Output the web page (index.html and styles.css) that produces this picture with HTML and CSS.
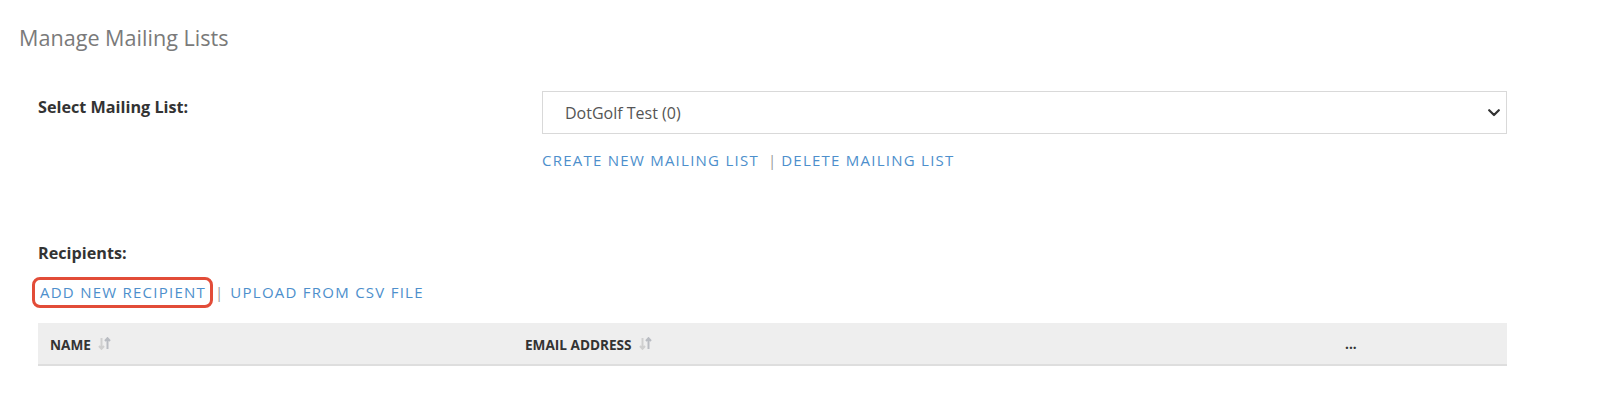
FILE: index.html
```html
<!DOCTYPE html>
<html lang="en">
<head>
<meta charset="utf-8">
<title>Manage Mailing Lists</title>
<link rel="stylesheet" href="styles.css">
</head>
<body>
<div class="page">
  <h1 class="title">Manage Mailing Lists</h1>

  <div class="content">
    <div class="form-row">
      <label class="label" for="list">Select Mailing List:</label>
      <div class="field">
        <div class="select-wrap">
          <select id="list" class="select">
            <option>DotGolf Test (0)</option>
          </select>
          <svg class="chevron" width="12" height="8" viewBox="0 0 12 8" aria-hidden="true"><path d="M1.2 1.2 L6 6 L10.8 1.2" fill="none" stroke="#333" stroke-width="2.2" stroke-linecap="round" stroke-linejoin="round"/></svg>
        </div>
        <div class="links links-top">
          <a class="link" href="#">Create new mailing list</a><span class="sep">|</span><a class="link" href="#">Delete mailing list</a>
        </div>
      </div>
    </div>

    <div class="recipients">
      <div class="label">Recipients:</div>
      <div class="links links-bottom">
        <a class="link highlight" href="#">Add new recipient</a><span class="sep">|</span><a class="link" href="#">Upload from CSV file</a>
      </div>
    </div>

    <table class="grid">
      <colgroup>
        <col class="c-name">
        <col class="c-email">
        <col class="c-more">
      </colgroup>
      <thead>
        <tr>
          <th><span class="th-text">NAME</span><svg class="sort" width="13" height="13" viewBox="0 0 13 13" aria-hidden="true"><path d="M3.5 1 V11.5 M1 9 L3.5 11.8 L6 9" fill="none" stroke="#cfcfcf" stroke-width="2"/><path d="M9.5 12 V1.5 M7 4 L9.5 1.2 L12 4" fill="none" stroke="#b9bcc2" stroke-width="2"/></svg></th>
          <th><span class="th-text">EMAIL ADDRESS</span><svg class="sort" width="13" height="13" viewBox="0 0 13 13" aria-hidden="true"><path d="M3.5 1 V11.5 M1 9 L3.5 11.8 L6 9" fill="none" stroke="#cfcfcf" stroke-width="2"/><path d="M9.5 12 V1.5 M7 4 L9.5 1.2 L12 4" fill="none" stroke="#b9bcc2" stroke-width="2"/></svg></th>
          <th class="more">...</th>
        </tr>
      </thead>
      <tbody></tbody>
    </table>
  </div>
</div>
</body>
</html>
```

FILE: styles.css
```css
* { box-sizing: border-box; }

html, body {
  margin: 0;
  padding: 0;
  background: #ffffff;
}

body {
  font-family: "Open Sans", "Liberation Sans", Arial, sans-serif;
  color: #333333;
  width: 1619px;
  height: 415px;
  overflow: hidden;
}

.page {
  padding: 24px 0 0 19px;
}

.title {
  margin: 0;
  font-size: 21.6px;
  line-height: 28px;
  font-weight: 400;
  color: #7a7a7a;
}

.content {
  width: 1469px;
  margin: 39px 0 0 19px;
}

.form-row {
  display: flex;
}

.label {
  display: block;
  width: 504px;
  flex: none;
  padding-top: 5px;
  font-size: 16.2px;
  line-height: 22px;
  font-weight: 700;
  color: #333333;
}

.field {
  flex: 1;
}

.select-wrap {
  position: relative;
  height: 43px;
}

.select {
  display: block;
  width: 100%;
  height: 43px;
  margin: 0;
  padding: 0 40px 0 22px;
  border: 1px solid #d9d9d9;
  border-radius: 0;
  background: #ffffff;
  font-family: "Open Sans", "Liberation Sans", Arial, sans-serif;
  font-size: 16px;
  color: #555555;
  -webkit-appearance: none;
  appearance: none;
  outline: none;
}

.chevron {
  position: absolute;
  right: 7px;
  top: 18px;
  pointer-events: none;
}

.links {
  font-size: 15px;
  line-height: 20px;
  letter-spacing: 1.25px;
  text-transform: uppercase;
  white-space: nowrap;
}

.links-top {
  margin-top: 16px;
}

.link {
  color: #4d8fcc;
  text-decoration: none;
}

.sep {
  display: inline-block;
  color: #9a9a9a;
  letter-spacing: 0;
}

.links-top .sep {
  margin: 0 5px 0 9px;
}

.links-bottom .sep {
  margin: 0 7px 0 9px;
}

.recipients {
  margin-top: 72px;
}

.recipients .label {
  padding-top: 0;
  width: auto;
}

.links-bottom {
  margin-top: 18px;
  padding-left: 2px;
}

.highlight {
  position: relative;
}

.highlight::after {
  content: "";
  position: absolute;
  left: -8px;
  right: -7px;
  top: -5px;
  bottom: -6px;
  border: 3px solid #e24c38;
  border-radius: 8px;
}

.grid {
  width: 1469px;
  margin-top: 21px;
  border-collapse: collapse;
  table-layout: fixed;
}

.c-name { width: 475px; }
.c-email { width: 820px; }

.grid th {
  height: 42px;
  padding: 0 12px;
  background: #eeeeee;
  border-bottom: 2px solid #dedede;
  text-align: left;
  font-size: 13.6px;
  font-weight: 700;
  color: #333333;
  white-space: nowrap;
  vertical-align: middle;
}

.th-text {
  vertical-align: middle;
}

.sort {
  margin-left: 7px;
  vertical-align: middle;
  position: relative;
  top: -1px;
}
```
